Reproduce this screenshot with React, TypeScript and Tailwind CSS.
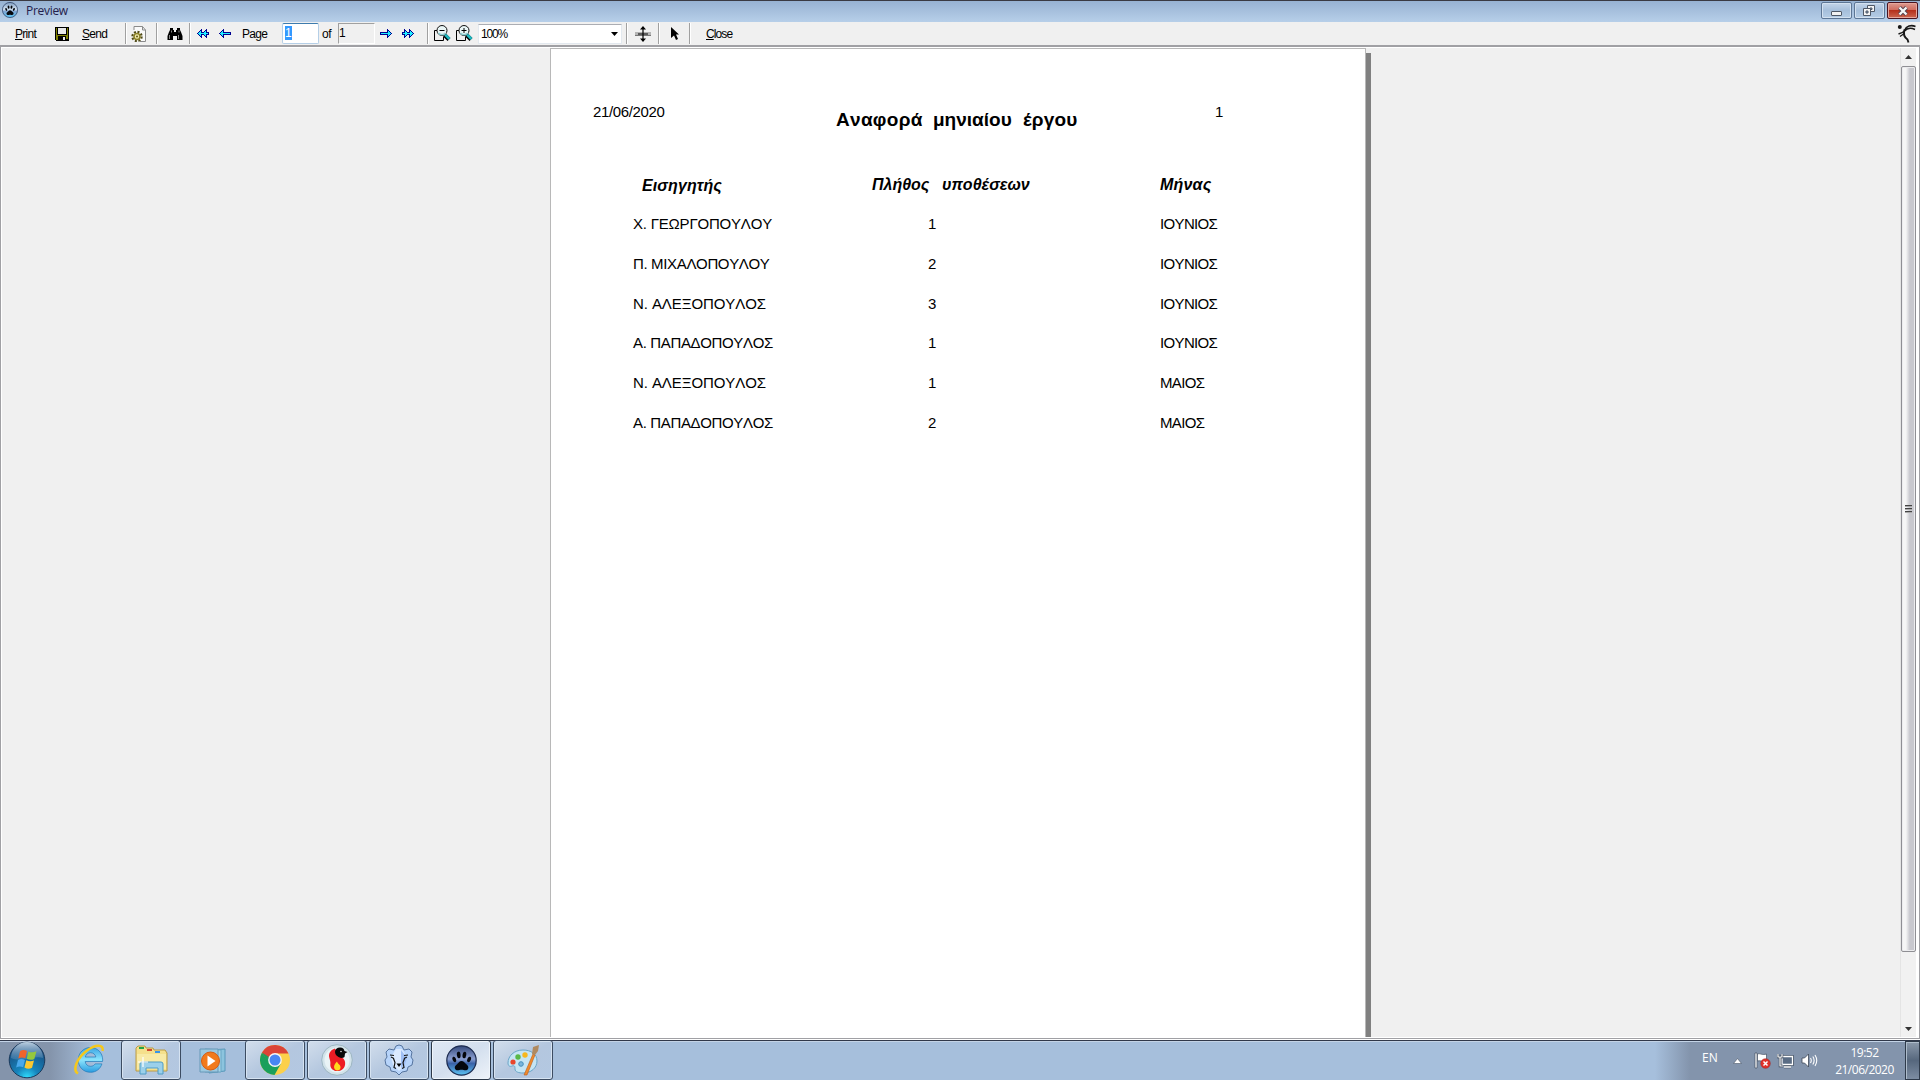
import React from "react";

const rows = [
  { name: "Χ. ΓΕΩΡΓΟΠΟΥΛΟΥ", count: "1", month: "ΙΟΥΝΙΟΣ", spacing: "tracking-[-0.2px]" },
  { name: "Π. ΜΙΧΑΛΟΠΟΥΛΟΥ", count: "2", month: "ΙΟΥΝΙΟΣ", spacing: "tracking-[-0.35px]" },
  { name: "Ν. ΑΛΕΞΟΠΟΥΛΟΣ", count: "3", month: "ΙΟΥΝΙΟΣ", spacing: "tracking-[-0.08px]" },
  { name: "Α. ΠΑΠΑΔΟΠΟΥΛΟΣ", count: "1", month: "ΙΟΥΝΙΟΣ", spacing: "tracking-[-0.35px]" },
  { name: "Ν. ΑΛΕΞΟΠΟΥΛΟΣ", count: "1", month: "ΜΑΙΟΣ", spacing: "tracking-[-0.08px]" },
  { name: "Α. ΠΑΠΑΔΟΠΟΥΛΟΣ", count: "2", month: "ΜΑΙΟΣ", spacing: "tracking-[-0.35px]" },
];

function Paw({ className, dark }: { className: string; dark?: boolean }) {
  return (
    <svg className={className} viewBox="0 0 30 30">
      <defs>
        <linearGradient id={dark ? "pawA" : "pawB"} x1="0" y1="0" x2="0" y2="1">
          <stop offset="0" stopColor={dark ? "#34497c" : "#7d9cc0"} />
          <stop offset=".45" stopColor={dark ? "#8c9fd0" : "#d3e2f2"} />
          <stop offset=".6" stopColor={dark ? "#3a62a8" : "#7fa6d4"} />
          <stop offset="1" stopColor="#5cc4f4" />
        </linearGradient>
      </defs>
      <circle cx="15" cy="15" r="14.2" fill={dark ? "url(#pawA)" : "url(#pawB)"} stroke="#1d2c50" strokeWidth="1.2" />
      <g fill="#05070c">
        <ellipse cx="8" cy="14" rx="1.7" ry="2.8" transform="rotate(-22 8 14)" />
        <ellipse cx="12.300" cy="9.6" rx="1.8" ry="3.2" transform="rotate(-6 12.3 9.6)" />
        <ellipse cx="17.800" cy="9.6" rx="1.8" ry="3.2" transform="rotate(8 17.8 9.6)" />
        <ellipse cx="22.300" cy="14" rx="1.7" ry="2.8" transform="rotate(24 22.3 14)" />
        <path d="M15 15.500c2 0 3 1.800 4.400 3 1.700 1.400 2.800 2.600 2 4.500-.8 1.700-2.800 1.500-4.300 1.200-1.500-.4-2.800-.3-4.300.1-1.700.4-3.600.2-4.200-1.600-.6-1.900.8-3 2.300-4.300 1.400-1.100 2.200-2.900 4.100-2.900z" />
      </g>
    </svg>
  );
}

function Arrow({ double, flip }: { double?: boolean; flip?: boolean }) {
  return (
    <svg className={flip ? "h-[9px] w-[12px] -scale-x-100" : "h-[9px] w-[12px]"} viewBox="0 0 12 9" shapeRendering="crispEdges">
      <path d="M4 0h1v3h7v3H5v3H4v-1H3v-1H2v-1H1v-1H0v-1h1v-1h1v-1h1v-1h1z" fill="#000090" />
      {double && <path d="M9 0h1v9H9v-1H8v-1H7v-1H6V3h1V2h1V1h1z" fill="#000090" />}
      <path d="M1 4h10v1H1zM2 3h2v3H2zM3 2h1v5H3z" fill="#20f0ff" />
      {double && <path d="M6 4h5v1H6zM7 3h2v3H7zM8 2h1v5H8z" fill="#20f0ff" />}
    </svg>
  );
}

function Magnifier({ plus }: { plus?: boolean }) {
  return (
    <svg className="h-[17px] w-[17px]" viewBox="0 0 17 17">
      <path d="M.5 5.500H5M.5 5.500V15.500H9.500V12" fill="none" stroke="#000" />
      <path d="M10.500 10L15 14.500" stroke="#000" strokeWidth="4" />
      <path d="M11 9.500L15.500 14" stroke="#1cb8c0" strokeWidth="2.600" />
      <circle cx="8" cy="5.500" r="5" fill="#eaf6f6" stroke="#101010" />
      <path d="M4.500 8a4.300 4.300 0 0 0 7 0" fill="none" stroke="#8fd0d4" strokeWidth="1.500" />
      <path d={plus ? "M5.500 5.500h5M8 3v5" : "M5.500 5.500h5"} stroke="#000" />
    </svg>
  );
}

function Separator() {
  return <div className="h-[21px] w-[2px] shrink-0 border-l border-[#a0a0a0] bg-white" />;
}

function Toolbar() {
  return (
    <div className="flex h-[23px] items-center bg-[#f0f0f0] text-[12px] leading-[20px] text-black [font-family:'Liberation_Sans',sans-serif]">
      <div className="w-[55px] pl-[15px] tracking-[-0.7px]"><span className="underline">P</span>rint</div>
      <div className="w-[27px]">
        <svg className="h-[14px] w-[14px]" viewBox="0 0 14 14" shapeRendering="crispEdges">
          <path d="M0 0h14v14H1l-1-1z" fill="#000" />
          <path d="M1 1h1v7h10V1h1v11h-2V9H3v4H1z" fill="#808000" />
          <path d="M3 1h8v6H3z" fill="#e8e8e8" />
          <path d="M8 10h2v3H8z" fill="#e8e8e8" />
        </svg>
      </div>
      <div className="w-[43px] tracking-[-0.7px]"><span className="underline">S</span>end</div>
      <Separator />
      <div className="w-[29px] pl-[4px]">
        <svg className="h-[16px] w-[16px]" viewBox="0 0 16 16">
          <path d="M3 .5h9l3 3v12H3z" fill="#fafafa" />
          <path d="M3 4V.5h8.500L14.500 4v11.500H9M11.500.5V4h3" fill="none" stroke="#8a8a8a" />
          <circle cx="6" cy="10.500" r="4.600" fill="none" stroke="#4f4a18" strokeWidth="2.200" strokeDasharray="2 1.600" />
          <circle cx="6" cy="10.500" r="3" fill="#f2ecae" stroke="#8a8028" strokeWidth="1.600" />
          <circle cx="6" cy="10.500" r="1.100" fill="#6c641e" />
        </svg>
      </div>
      <Separator />
      <div className="w-[31px] pl-[9px]">
        <svg className="h-[14px] w-[16px]" viewBox="0 0 16 14">
          <path d="M3 1h3v2h1v2h2V3h1V1h3v2l1 2 1.500 4v4H10V9H6v4H.5V9L2 5l1-2z" fill="#000" />
          <path d="M2.500 8v4M4.500 3.500v2M11.500 8v4M12 3.500v2" stroke="#a8a8a8" strokeWidth=".8" />
        </svg>
      </div>
      <Separator />
      <div className="w-[22px] pl-[6px]"><Arrow double /></div>
      <div className="w-[29px] pl-[6px]"><Arrow /></div>
      <div className="w-[40px] tracking-[-0.7px]">Page</div>
      <div className="flex h-[21px] w-[37px] rounded-[2px] border border-[#b5cfe7] border-t-[#3d7bad] bg-white pl-[2px] pt-[2px]">
        <div className="h-[14px] w-[7px] bg-[#3399ff] leading-[14px] text-white">1</div>
      </div>
      <div className="w-[19px] pl-[3px] tracking-[-0.5px]">of</div>
      <div className="h-[21px] w-[37px] border border-white border-l-[#a0a0a0] border-t-[#a0a0a0] leading-[18px]">1</div>
      <div className="w-[22px] pl-[5px]"><Arrow flip /></div>
      <div className="w-[30px] pl-[5px]"><Arrow double flip /></div>
      <Separator />
      <div className="w-[27px] pl-[5px]"><Magnifier /></div>
      <div className="w-[22px]"><Magnifier plus /></div>
      <div className="flex h-[20px] w-[144px] items-center justify-between border border-[#e3e9ef] border-t-[#abadb3] bg-white pl-[2px] pr-[3px] leading-[16px]">
        <span className="tracking-[-1.2px]">100%</span>
        <svg className="h-[4px] w-[7px]" viewBox="0 0 7 4"><path d="M0 0h7L3.500 4z" /></svg>
      </div>
      <div className="w-[4px]" />
      <Separator />
      <div className="w-[30px] pl-[7px]">
        <svg className="h-[16px] w-[16px]" viewBox="0 0 16 16">
          <path d="M0 6h16v4H0z" fill="#b4b4b4" /><path d="M0 9.500h16" stroke="#777" />
          <path d="M8 1v14M3 8h10" stroke="#000" strokeWidth="1.200" />
          <path d="M8 0l3 3.500H5zM8 16l3-3.500H5z" />
        </svg>
      </div>
      <Separator />
      <div className="w-[29px] pl-[11px]">
        <svg className="h-[13px] w-[8px]" viewBox="0 0 8 13"><path d="M0 0l8 7.500H5l2 4.500-2 1-2-4.500-3 2.500z" /></svg>
      </div>
      <Separator />
      <div className="flex-1 pl-[15px] tracking-[-0.9px]"><span className="underline">C</span>lose</div>
      <svg className="mr-[4px] h-[19px] w-[19px]" viewBox="0 0 19 19" fill="none" stroke="#181818">
        <circle cx="2.800" cy="3" r="2" fill="#181818" stroke="none" />
        <path d="M18.500 2.500C14 .8 9.500 2 7.500 6.500" strokeWidth="1.800" />
        <path d="M18 5.500C14 3.500 10 4 7.500 7c-1.500 1.500-3 2-6 3" strokeWidth="1.500" />
        <path d="M7.500 5.500C6 10 7 13 10.500 15.500l1 3" strokeWidth="1.900" />
        <path d="M6.500 10L3 12.500" strokeWidth="1.300" />
      </svg>
    </div>
  );
}

function TitleBar() {
  return (
    <div className="flex h-[22px] border-t border-[#3a3a42] bg-gradient-to-b from-[#97b2d2] to-[#b7cfe9]">
      <Paw className="ml-[2px] mt-[1px] h-[16px] w-[16px]" />
      <div className="ml-[8px] flex-1 text-[12px] leading-[20px] tracking-[-0.3px] text-[#24204a] [font-family:'Open_Sans',sans-serif]">Preview</div>
      <div className="mr-[2px] mt-[1px] flex h-[17px] gap-[2px]">
        <div className="flex w-[31px] items-center justify-center rounded-[2px] border border-[#5d7695] bg-gradient-to-b from-[#c4d5e9] via-[#a6bfdb] to-[#b5cde6] shadow-[inset_0_0_0_1px_#d3e1f0]">
          <div className="mt-[5px] h-[5px] w-[11px] rounded-[1px] border border-[#4f5866] bg-[#f2f2f2]" />
        </div>
        <div className="flex w-[31px] items-center justify-center rounded-[2px] border border-[#5d7695] bg-gradient-to-b from-[#c4d5e9] via-[#a6bfdb] to-[#b5cde6] shadow-[inset_0_0_0_1px_#d3e1f0]">
          <svg className="mr-[2px] h-[11px] w-[12px]" viewBox="0 0 12 11" fill="#f4f4f4" stroke="#4f5866">
            <path d="M4.500.5h7v6h-7z" /><path d="M7 3h2v1.500H7z" fill="#8aa6c6" />
            <path d="M.5 3.500h7v7h-7z" /><path d="M3 6h2v2H3z" fill="#8aa6c6" />
          </svg>
        </div>
        <div className="flex w-[31px] items-center justify-center rounded-[2px] border border-[#4a1420] bg-[linear-gradient(#dc9a90,#cf6a5c_48%,#b5301c_50%,#cc6650)] shadow-[inset_0_0_0_1px_#e6a79c]">
          <svg className="h-[10px] w-[12px]" viewBox="0 0 12 10">
            <path d="M2.500 1.500l7 7M9.500 1.500l-7 7" stroke="#51424e" strokeWidth="4.200" />
            <path d="M2.500 1.500l7 7M9.500 1.500l-7 7" stroke="#f6f6f6" strokeWidth="2.400" />
          </svg>
        </div>
      </div>
    </div>
  );
}

function Report() {
  return (
    <div className="ml-[548px] flex h-[989px]">
      <div className="h-full w-[816px] border-l border-r border-t border-[#b8b8b8] bg-white text-[15px] leading-[20px] text-black [font-kerning:none] [font-family:'Liberation_Sans',sans-serif]">
        <div className="flex h-[84px] pt-[53px]">
          <div className="w-[285px] pl-[42px] tracking-[-0.35px]">21/06/2020</div>
          <div className="flex pt-[6px] text-[19px] font-bold leading-[24px]">
            <span className="w-[97px] tracking-[0.3px]">Αναφορά</span>
            <span className="w-[90px]">μηνιαίου</span>
            <span className="w-[192px] tracking-[0.2px]">έργου</span>
          </div>
          <div>1</div>
        </div>
        <div className="mt-[42px] flex h-[39px] text-[16px] font-bold italic">
          <div className="w-[321px] pl-[91px] pt-px tracking-[0.1px]">Εισηγητής</div>
          <div className="w-[70px]">Πλήθος</div>
          <div className="w-[218px]">υποθέσεων</div>
          <div className="tracking-[0.2px]">Μήνας</div>
        </div>
        {rows.map((row, i) => (
          <div key={i} className="flex h-[39.8px]">
            <div className={"w-[377px] whitespace-nowrap pl-[82px] " + row.spacing}>{row.name}</div>
            <div className="w-[232px]">{row.count}</div>
            <div className="tracking-[-0.65px]">{row.month}</div>
          </div>
        ))}
      </div>
      <div className="mt-[5px] w-[5px] bg-[#808080]" />
    </div>
  );
}

function Viewer() {
  return (
    <div className="flex h-[995px] border-b border-white bg-[#f0f0f0]">
      <div className="flex w-full border-b border-l border-r border-t-2 border-[#a0a0a4]">
        <div className="flex w-full border border-white">
          <div className="flex-1"><Report /></div>
          <div className="flex w-[16px] flex-col items-center border-l border-[#e4e4e4] bg-[#f1f1f1]">
            <div className="flex h-[18px] items-center">
              <svg className="h-[4px] w-[7px]" viewBox="0 0 7 4"><path d="M3.500 0L7 4H0z" fill="#333" /></svg>
            </div>
            <div className="flex h-[886px] w-[15px] flex-col items-center justify-center gap-px rounded-[2px] border border-[#8f8f94] bg-gradient-to-r from-[#f6f6f6] from-30% to-[#c8c8ce] to-60% shadow-[inset_0_0_0_1px_#ececee]">
              {[0, 1, 2].map((i) => (
                <div key={i} className="h-[2px] w-[7px] border-b border-[#aaa] bg-[#444]" />
              ))}
            </div>
            <div className="flex-1" />
            <div className="flex h-[16px] items-center">
              <svg className="h-[4px] w-[7px]" viewBox="0 0 7 4"><path d="M0 0h7L3.500 4z" fill="#333" /></svg>
            </div>
          </div>
          <div className="w-[2px] bg-white" />
        </div>
      </div>
    </div>
  );
}

function TaskButton({ active, children }: { active?: boolean; children: React.ReactNode }) {
  return (
    <div className={active
      ? "-mt-px flex h-[40px] w-[60px] items-center justify-center rounded-[3px] border border-[#2c3848] bg-gradient-to-br from-[#dfe8f4] via-[#d3dfee] to-[#eef3f9] shadow-[inset_0_0_0_1px_#eff5fb]"
      : "-mt-px flex h-[40px] w-[60px] items-center justify-center rounded-[3px] border border-[#3c4c62] bg-gradient-to-br from-[#d2deec] via-[#b4c7df] to-[#b3c8e2] shadow-[inset_0_0_0_1px_#d6e3f1]"}>
      {children}
    </div>
  );
}

function StartOrb() {
  return (
    <svg className="ml-[8px] h-[38px] w-[38px]" viewBox="0 0 38 38">
      <defs>
        <radialGradient id="orb" cx=".5" cy="1" r=".9">
          <stop offset="0" stopColor="#30e0ff" /><stop offset=".35" stopColor="#1684bc" /><stop offset="1" stopColor="#1a4a7c" />
        </radialGradient>
        <linearGradient id="orbShine" x1="0" y1="0" x2="0" y2="1">
          <stop offset="0" stopColor="#d8e8f4" stopOpacity=".85" /><stop offset="1" stopColor="#7fa6c8" stopOpacity=".25" />
        </linearGradient>
      </defs>
      <circle cx="19" cy="19" r="17.800" fill="url(#orb)" stroke="#1b3a5c" />
      <path d="M3 17a16 16 0 0 1 32 0c-9-3-22 5-32 0z" fill="url(#orbShine)" />
      <g transform="translate(1.5 1.500) scale(.92)">
        <path d="M11.500 9.500c2.500-1.700 5-1.500 7.500-.3l-1.800 8c-2.600-1.200-5-1.200-7.600.2z" fill="#f0642a" />
        <path d="M20.500 9.700c2.800 1.400 5.500 1.300 8.800-.2l-2.300 8.300c-2.800 1.500-5.500 1.300-8.200-.2z" fill="#94c83c" />
        <path d="M9.200 19c2.600-1.400 5-1.300 7.600-.1l-2 8c-2.500-1.300-5-1.200-7.600.4z" fill="#48a8ec" />
        <path d="M18.300 19.200c2.700 1.500 5.400 1.600 8.300.3l-2.100 7.900c-2.900 1.500-5.500 1.300-8.300-.3z" fill="#fcc830" />
      </g>
    </svg>
  );
}

function Taskbar() {
  return (
    <div className="flex h-[40px] border-t border-[#30384a] bg-[linear-gradient(90deg,#8494ab_0,#8494ab_50px,#a6bfdc_95px,#a6bfdc_1655px,#8394ac_1690px,#8394ac)] shadow-[inset_0_1px_0_#c3d3e6]">
      <StartOrb />
      <div className="w-[75px] pl-[27px] pt-[1px]">
        <svg className="h-[34px] w-[34px]" viewBox="0 0 34 34">
          <defs><linearGradient id="ie" x1="0" y1="0" x2="0" y2="1"><stop offset="0" stopColor="#3aa4e4" /><stop offset=".5" stopColor="#8ce4fc" /><stop offset="1" stopColor="#2a9ce0" /></linearGradient></defs>
          <path d="M29.500 19.500H12.200c.3 3 2.500 4.800 5.400 4.800 2 0 3.600-.9 4.500-2.400h6.800C27.300 27 23 30.300 17.500 30.300 10.500 30.300 5.300 25.200 5.300 18S10.500 5.500 17.500 5.500s12.200 5.300 12.200 12.500zM12.300 15h10.500c-.4-2.500-2.500-4.300-5.200-4.300S12.700 12.500 12.300 15z" fill="url(#ie)" stroke="#2478b8" strokeWidth=".7" />
          <path d="M5 31.500C-1 28 4 16 14 8.500 22 2.500 31 1.500 29.500 9" fill="none" stroke="#f5c81c" strokeWidth="2.500" />
        </svg>
      </div>
      <TaskButton>
        <svg className="h-[30px] w-[34px]" viewBox="0 0 34 30">
          <path d="M2 3l2-2h7l1 2h7l1 2h11l2 3v18H2z" fill="#f5e08c" stroke="#b99a45" />
          <path d="M5 2h5v2H5z" fill="#23a545" /><path d="M13 4h5v2h-5z" fill="#d04830" /><path d="M21 6h5v2h-5z" fill="#3895e8" />
          <path d="M3 9h29v15H3z" fill="#f8eaa6" />
          <path d="M6 29V19q0-2 2-2h19q2 0 2 2v10h-5v-6H12v6z" fill="#9bd0ea" stroke="#4f9cc6" />
          <path d="M9 12v10M4 17h10" stroke="#fff" strokeWidth="1.200" />
        </svg>
      </TaskButton>
      <div className="w-[64px] pl-[18px] pt-[6px]">
        <svg className="h-[28px] w-[30px]" viewBox="0 0 30 28">
          <path d="M10 3l16-1v22l-16 2z" fill="#8cc4de" stroke="#5898ba" /><path d="M6 2l16 1v22H6z" fill="#a6d4e8" stroke="#6aa6c4" />
          <path d="M1 2h18v23H1z" fill="#9bc8e0" stroke="#6698b8" />
          <circle cx="11.500" cy="14" r="9" fill="#f27a1c" stroke="#d65c10" />
          <path d="M8.500 8.500l8 5.500-8 5.500z" fill="#fff" />
        </svg>
      </div>
      <div className="flex gap-[2px]">
        <TaskButton>
          <svg className="h-[30px] w-[30px]" viewBox="0 0 30 30">
            <circle cx="15" cy="15" r="15" fill="#fcd04a" />
            <path d="M2 7.500A15 15 0 0 0 14.500 30L21 18.500 15 21.500 9 18z" fill="#1a9f5b" />
            <path d="M2 7.500L9 18l6-9.500h13.500A15 15 0 0 0 2 7.500z" fill="#db4437" />
            <path d="M2 7.500L8.500 19l2-6z" fill="#1a9f5b" />
            <circle cx="15" cy="15" r="6.900" fill="#f4f4f4" /><circle cx="15" cy="15" r="5.500" fill="#4886f2" />
          </svg>
        </TaskButton>
        <TaskButton>
          <svg className="h-[32px] w-[32px]" viewBox="0 0 32 32">
            <circle cx="16" cy="16" r="15.300" fill="#d3e3ea" stroke="#9db6c2" /><circle cx="16" cy="16" r="12.500" fill="#e9f3f6" />
            <path d="M14 4.500C9 6 7 10 8.500 14.500c1 3 1 4 .8 6.500 0 4 4 6.500 8 6 5-.5 8-5 6.500-10-1-3-3.500-4-6.800-6z" fill="#ed1c24" />
            <path d="M14 8c0-3 2-4.500 5-4.500s4 1.500 4.500 3.500l3 1-2.500 1.500-.5 3.500c-2 1.500-4 1-6 0-2-1-3.500-3-3.500-5z" fill="#080808" />
            <circle cx="20" cy="7.500" r=".8" fill="#ddd" />
            <path d="M16 17.500c-2.500 3-4 5-2 8 2 2 5.500 1 5.500-2 0-3-2.500-3-3.500-6z" fill="#ffd91c" />
          </svg>
        </TaskButton>
        <TaskButton>
          <svg className="h-[32px] w-[30px]" viewBox="0 0 30 32">
            <path d="M12 2l3-1 3 1 2 4 5-1 3 3-1 5 2 3-1 5-4 2-1 4-5 1-3 3-3-3-5-1-1-4-4-2-1-5 2-3-1-5 3-3 5 1z" fill="#b7d4fa" stroke="#55749f" />
            <path d="M12 5h6l5 8-2 8-6 6-6-6-2-8z" fill="#dbeaff" /><path d="M17 6l6 8-2 7-4 3z" fill="#9fbff4" />
            <path d="M6 11l4 .5M24 11l-4 .5M7 13l3 1.500M23 13l-3 1.500M9.500 14.500l1.500 4-1 5 2 1M20.500 14.500l-1.500 4 1 5-2 1" fill="none" stroke="#111" strokeWidth="1.200" />
            <path d="M12.500 19.500h5L15 23z" />
          </svg>
        </TaskButton>
        <TaskButton active><Paw dark className="h-[31px] w-[31px]" /></TaskButton>
        <TaskButton>
          <svg className="h-[32px] w-[34px]" viewBox="0 0 34 32">
            <path d="M17 6C8 6 2 12 2 19c0 3 2 4 4 3 3-1 3 1 3 3 0 3 4 4 8 4 8 0 14-5 14-12S25 6 17 6z" fill="#c5e5f4" stroke="#6aa5c8" />
            <circle cx="7" cy="18" r="2.600" fill="#e8452c" /><circle cx="12" cy="13" r="2.700" fill="#58b848" /><circle cx="19" cy="11" r="2.700" fill="#f7b81e" /><circle cx="15" cy="20" r="2.300" fill="#7ab6dc" stroke="#4890bc" />
            <path d="M18 31l9-21 2 1-8 20z" fill="#f08a2c" stroke="#b85c18" strokeWidth=".6" /><path d="M26 10l1-7 6-2-1 6-3 4z" fill="#b08a60" />
          </svg>
        </TaskButton>
      </div>
      <div className="flex-1" />
      <div className="flex w-[218px] text-white [font-family:'Open_Sans',sans-serif]">
        <div className="w-[31px] pt-[9px] text-[12px] leading-[16px]">EN</div>
        <svg className="mt-[17px] h-[6px] w-[9px]" viewBox="0 0 9 6"><path d="M4.500.5L8.500 5.500H.5z" fill="#fff" stroke="#4c586a" strokeWidth=".6" /></svg>
        <svg className="ml-[12px] mt-[11px] h-[17px] w-[17px]" viewBox="0 0 17 17">
          <path d="M1 1h2v15H1z" fill="#fff" stroke="#444f60" strokeWidth=".7" /><path d="M3.500 2c3-1 4 1.500 9 0v7c-4 1.500-6-1-9 0z" fill="#fff" stroke="#444f60" strokeWidth=".7" />
          <circle cx="11.500" cy="11.500" r="4.800" fill="#e0322a" stroke="#9a2020" strokeWidth=".5" /><path d="M9.500 9.500l4 4M13.500 9.500l-4 4" stroke="#fff" strokeWidth="1.500" />
        </svg>
        <svg className="ml-[6px] mt-[12px] h-[16px] w-[17px]" viewBox="0 0 17 16">
          <path d="M5 3.500h10.500v8H5zM7 14h7M10.500 12v2" fill="#5a6c84" stroke="#333f50" strokeWidth="2.600" />
          <path d="M5 3.500h10.500v8H5zM7 14h7" fill="#5a6c84" stroke="#fff" strokeWidth="1.300" />
          <path d="M1 1v3h4V1M3 4v9h3" fill="none" stroke="#333f50" strokeWidth="2.400" /><path d="M1 1v3h4V1M3 4v9h3" fill="none" stroke="#fff" strokeWidth="1.200" />
        </svg>
        <svg className="ml-[7px] mt-[12px] h-[15px] w-[17px]" viewBox="0 0 17 15">
          <path d="M1 5h2.500L7.500 1v13L3.500 10H1z" fill="#fff" stroke="#3c4656" strokeWidth=".8" />
          <path d="M9.500 5q1.500 2.500 0 5M11.800 3.500q2.700 4 0 8M14 2q3.500 5.500 0 11" fill="none" stroke="#fff" strokeWidth="1.100" />
        </svg>
        <div className="flex-1 pl-[6px] pt-[3px] text-center text-[12px] leading-[17px] tracking-[-0.5px]">
          <div>19:52</div><div>21/06/2020</div>
        </div>
        <div className="w-[15px] border border-[#2e3a4a] bg-gradient-to-b from-[#8b99ab] via-[#56677d] to-[#7d8da2] shadow-[inset_1px_1px_0_#aebccb]" />
      </div>
    </div>
  );
}

export default function App() {
  return (
    <div className="flex h-[1080px] w-[1920px] flex-col overflow-hidden bg-[#f0f0f0]">
      <TitleBar />
      <Toolbar />
      <Viewer />
      <Taskbar />
    </div>
  );
}
